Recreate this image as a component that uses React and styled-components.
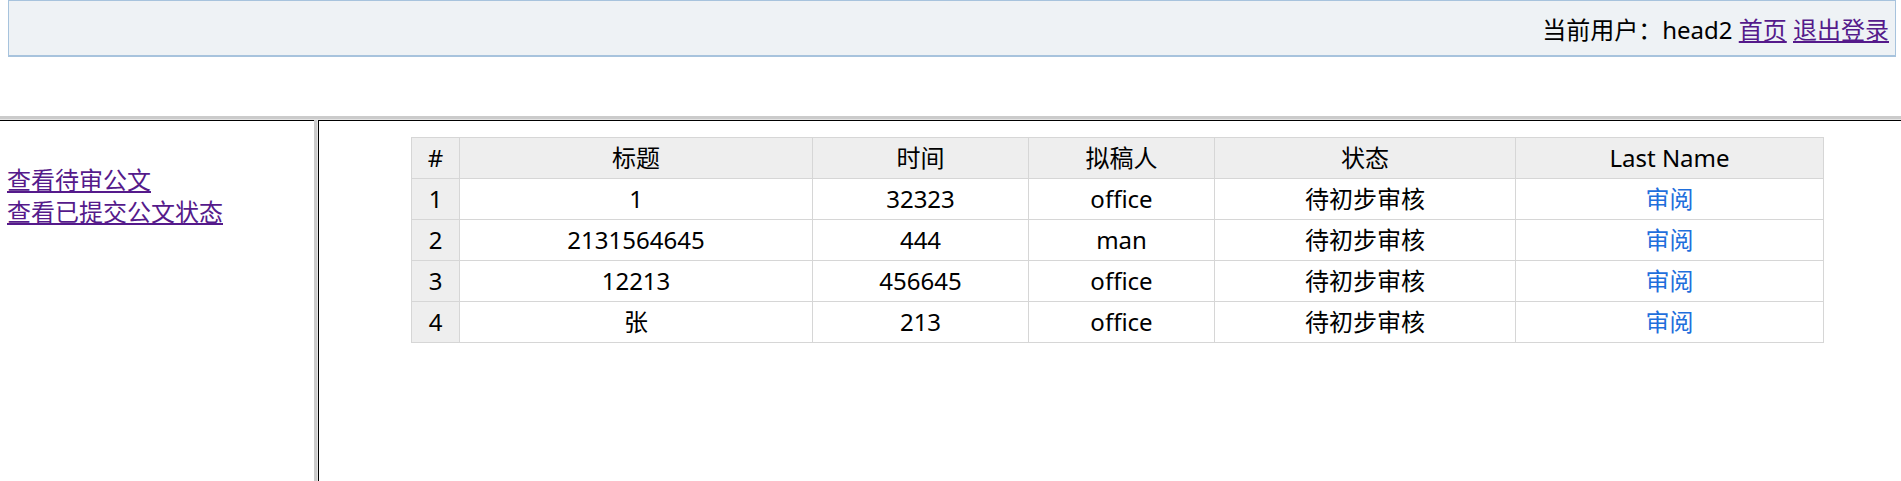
import React from "react";
import styled, { createGlobalStyle } from "styled-components";

const GlobalStyle = createGlobalStyle`
  html, body {
    margin: 0;
    padding: 0;
    background: #fff;
  }
  body {
    font-family: "Noto Sans", "Noto Sans CJK SC", sans-serif;
    font-size: 24px;
    color: #000;
  }
`;

const Page = styled.div`
  display: flex;
  flex-direction: column;
  height: 100vh;
  overflow: hidden;
`;

const TopFrame = styled.div`
  height: 116px;
  padding: 0 5px 0 8px;
  box-sizing: border-box;
`;

// plain block so the spaces between the links stay
const HeaderBar = styled.div`
  height: 57px;
  box-sizing: border-box;
  border: 1px solid #a7c3dd;
  border-bottom-width: 2px;
  background: #eef2f5;
  text-align: right;
  padding: 13px 6px 0 0;
  line-height: 32px;
  white-space: nowrap;
`;

const NavLink = styled.a`
  color: #551a8b;
  text-decoration: underline;
  cursor: pointer;
`;

const HSplit = styled.div`
  height: 4px;
  background: #cbcbcb;
  border-bottom: 1px solid #e4e4e4;
  box-sizing: border-box;
`;

const Bottom = styled.div`
  flex: 1;
  display: flex;
`;

const LeftFrame = styled.div`
  width: 314px;
  border-top: 1px solid #000;
  padding: 43px 0 0 7px;
  box-sizing: border-box;
  display: flex;
  flex-direction: column;
  align-items: flex-start;
  line-height: 32px;
`;

const VSplit = styled.div`
  width: 4px;
  background: #cbcbcb;
  border-right: 1px solid #e4e4e4;
  box-sizing: border-box;
`;

const RightFrame = styled.div`
  flex: 1;
  border-top: 1px solid #000;
  border-left: 1px solid #000;
  padding: 16px 0 0 92px;
  box-sizing: border-box;
`;

const Table = styled.table`
  border-collapse: collapse;
  table-layout: fixed;
  width: 1412px;
`;

const Cell = styled.td`
  height: 40px;
  padding: 0;
  border: 1px solid #d6d6d6;
  text-align: center;
  vertical-align: middle;
  line-height: 32px;
  font-weight: normal;
  background: ${(p) => (p.$shade ? "#eeeeee" : "#fff")};
`;

const ReviewLink = styled.a`
  color: #1f6fdc;
  text-decoration: none;
  cursor: pointer;
`;

const columns = [48, 353, 216, 186, 301, 308];
const headers = ["#", "标题", "时间", "拟稿人", "状态", "Last Name"];

const rows = [
  { id: 1, title: "1", time: "32323", author: "office", status: "待初步审核" },
  { id: 2, title: "2131564645", time: "444", author: "man", status: "待初步审核" },
  { id: 3, title: "12213", time: "456645", author: "office", status: "待初步审核" },
  { id: 4, title: "张", time: "213", author: "office", status: "待初步审核" },
];

export default function App() {
  return (
    <>
      <GlobalStyle />
      <Page>
        <TopFrame>
          <HeaderBar>
            当前用户：head2 <NavLink>首页</NavLink> <NavLink>退出登录</NavLink>
          </HeaderBar>
        </TopFrame>
        <HSplit />
        <Bottom>
          <LeftFrame>
            <NavLink>查看待审公文</NavLink>
            <NavLink>查看已提交公文状态</NavLink>
          </LeftFrame>
          <VSplit />
          <RightFrame>
            <Table>
              <colgroup>
                {columns.map((w, i) => (
                  <col key={i} style={{ width: w }} />
                ))}
              </colgroup>
              <thead>
                <tr>
                  {headers.map((h) => (
                    <Cell as="th" key={h} $shade>
                      {h}
                    </Cell>
                  ))}
                </tr>
              </thead>
              <tbody>
                {rows.map((r) => (
                  <tr key={r.id}>
                    <Cell $shade>{r.id}</Cell>
                    <Cell>{r.title}</Cell>
                    <Cell>{r.time}</Cell>
                    <Cell>{r.author}</Cell>
                    <Cell>{r.status}</Cell>
                    <Cell>
                      <ReviewLink>审阅</ReviewLink>
                    </Cell>
                  </tr>
                ))}
              </tbody>
            </Table>
          </RightFrame>
        </Bottom>
      </Page>
    </>
  );
}
